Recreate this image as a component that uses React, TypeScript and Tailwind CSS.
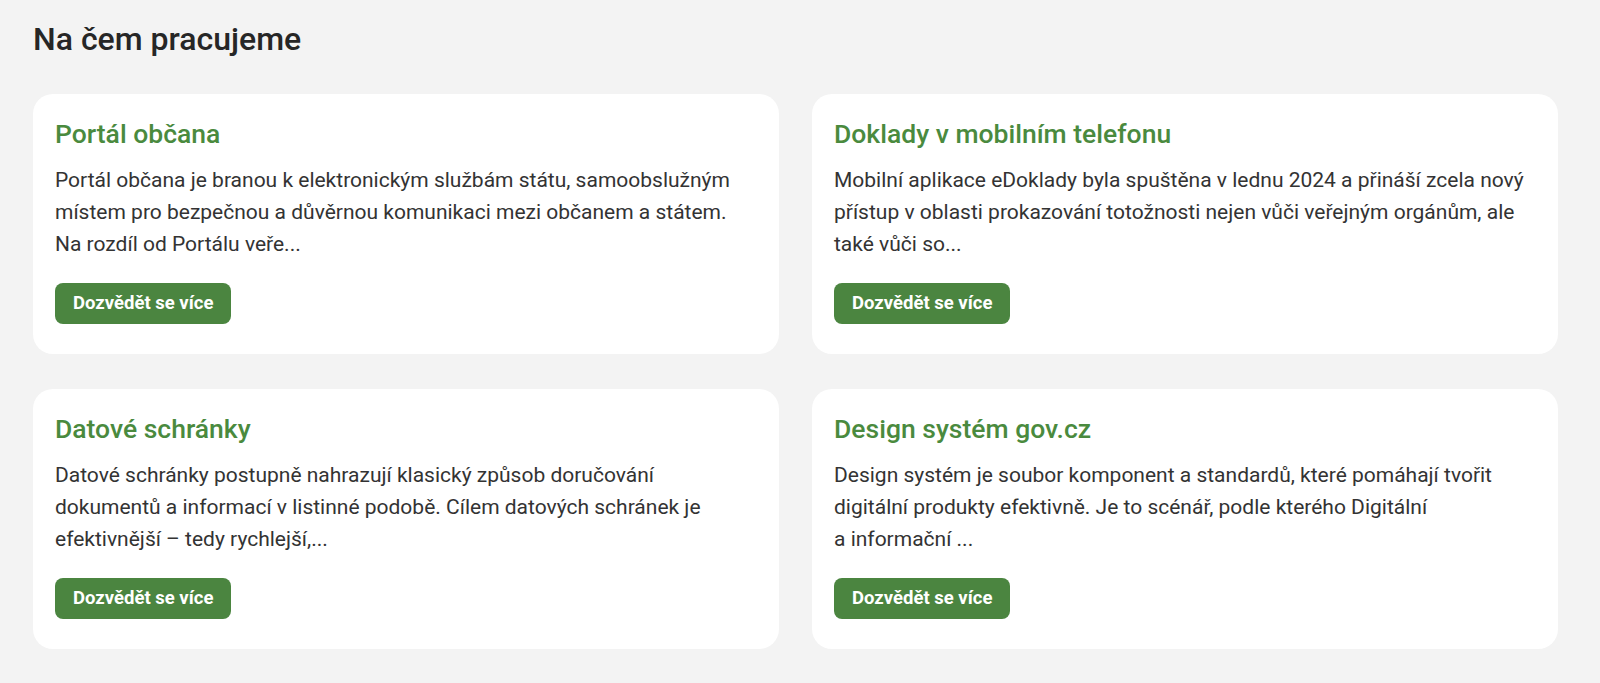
import React from 'react';

const PROJECTS = [
  {
    title: 'Portál občana',
    text: 'Portál občana je branou k elektronickým službám státu, samoobslužným místem pro bezpečnou a důvěrnou komunikaci mezi občanem a státem. Na rozdíl od Portálu veře...',
  },
  {
    title: 'Doklady v mobilním telefonu',
    text: 'Mobilní aplikace eDoklady byla spuštěna v lednu 2024 a přináší zcela nový přístup v oblasti prokazování totožnosti nejen vůči veřejným orgánům, ale také vůči so...',
  },
  {
    title: 'Datové schránky',
    text: 'Datové schránky postupně nahrazují klasický způsob doručování dokumentů a informací v listinné podobě. Cílem datových schránek je efektivnější – tedy rychlejší,...',
  },
  {
    title: 'Design systém gov.cz',
    text: 'Design systém je soubor komponent a standardů, které pomáhají tvořit digitální produkty efektivně. Je to scénář, podle kterého Digitální a\u00a0informační ...',
  },
];

function ProjectCard({ title, text }: { title: string; text: string }) {
  return (
    <div className="bg-white rounded-[20px] px-[22px] pt-[23px] pb-[30px] flex flex-col">
      <h3 className="text-[26.5px] leading-[34px] font-medium text-[#4a8a3e]">{title}</h3>
      <p className="mt-[13px] text-[21px] leading-[32px] text-[#333333]">{text}</p>
      <div className="mt-[23px]">
        <button
          type="button"
          className="h-[41px] px-[18px] rounded-[8px] bg-[#4b8540] text-white text-[18.5px] font-bold"
        >
          Dozvědět se více
        </button>
      </div>
    </div>
  );
}

export default function App() {
  return (
    <div className="min-h-[683px] bg-[#f3f3f3] pl-[33px] pr-[42px] pt-[20px] pb-[34px] font-['Roboto',sans-serif]">
      <h2 className="text-[32px] leading-[38px] font-medium text-[#262626]">Na čem pracujeme</h2>
      <div className="mt-[36px] grid grid-cols-2 gap-x-[33px] gap-y-[35px]">
        {PROJECTS.map(p => (
          <ProjectCard key={p.title} title={p.title} text={p.text} />
        ))}
      </div>
    </div>
  );
}
